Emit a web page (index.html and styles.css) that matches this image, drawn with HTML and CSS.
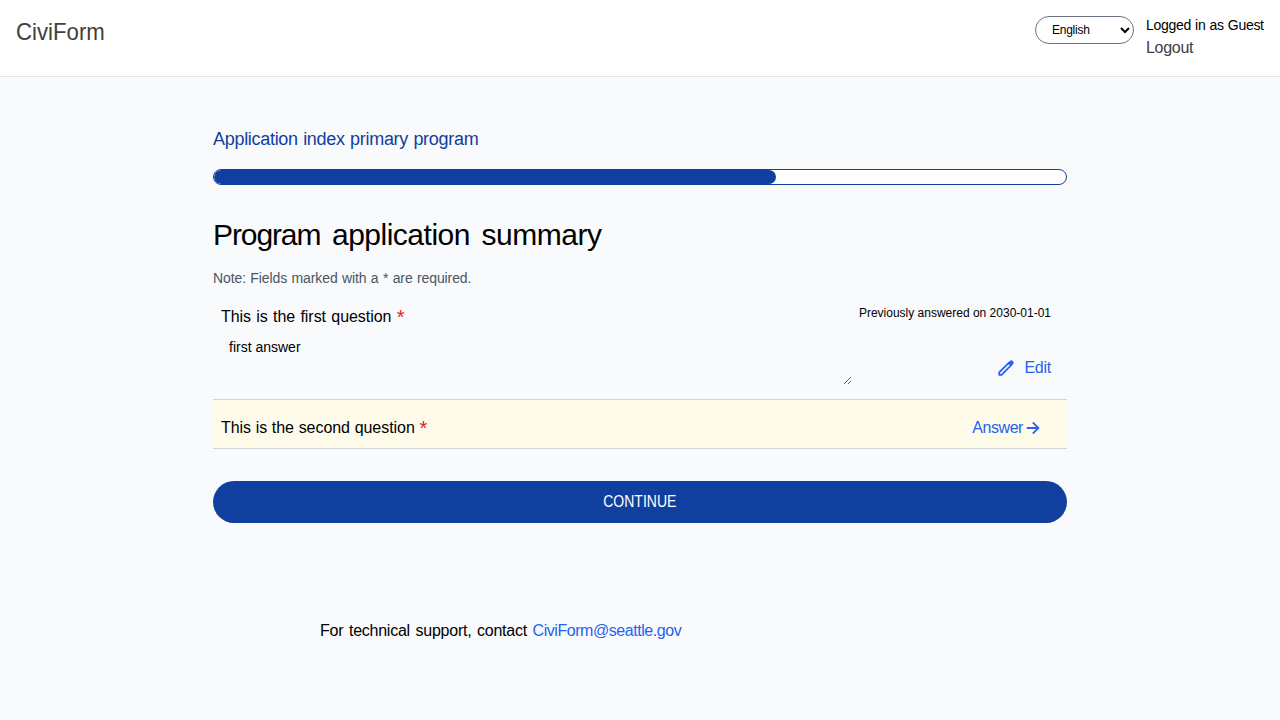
FILE: index.html
```
<!DOCTYPE html>
<html lang="en">
<head>
<meta charset="utf-8">
<title>Program application summary</title>
<link rel="stylesheet" href="styles.css">
</head>
<body>
<header class="nav">
  <div class="brand"><span class="brand-name">CiviForm</span></div>
  <div class="account">
    <select class="language" aria-label="Language"><option>English</option></select>
    <div class="user"><div class="status">Logged in as Guest</div><a class="logout">Logout</a></div>
  </div>
</header>
<main class="content">
  <h2 class="program">Application index primary program</h2>
  <div class="progress"><div class="progress-fill"></div></div>
  <h1 class="title"><span class="title-lead">Program</span> application summary</h1>
  <div class="note">Note: Fields marked with a * are required.</div>
  <section class="row answered">
    <div class="question">
      <div class="q-text first">This is the first question <span class="required">*</span></div>
      <textarea class="answer" readonly aria-label="Answer">first answer</textarea>
    </div>
    <div class="meta">
      <div class="previous">Previously answered on 2030-01-01</div>
      <a class="edit"><svg width="20" height="20" viewBox="0 0 20 20" fill="none" stroke="currentColor" stroke-width="1.8" stroke-linejoin="round"><path d="M3.2 14.4L12.8 4.8l2.4 2.4-9.6 9.6H3.2z"/><path d="M12.2 5l2.1-2.1q1-.8 2 .1l.7.7q.9 1 .1 2L15 7.8z" fill="currentColor" stroke-width=".7"/></svg><span>Edit</span></a>
    </div>
  </section>
  <section class="row unanswered">
    <div class="q-text second">This is the second question <span class="required">*</span></div>
    <a class="answer-link"><span>Answer</span><svg width="20" height="20" viewBox="0 0 20 20" fill="none" stroke="currentColor" stroke-width="1.8"><path d="M3.8 10h11.6M9.8 4.4l5.6 5.6-5.6 5.6"/></svg></a>
  </section>
  <button class="continue"><span class="continue-label">CONTINUE</span></button>
</main>
<footer class="support">For technical support, contact <a class="email">CiviForm@seattle.gov</a></footer>
</body>
</html>
```
FILE: styles.css
```
* { box-sizing: border-box; }
body { margin: 0; background: #f8fafc; color: #000; font: 16px/24px "Liberation Sans", Arial, sans-serif; letter-spacing: -.25px; }
h1, h2 { margin: 0; font-weight: 400; }
.nav { display: flex; justify-content: space-between; height: 77px; padding: 16px; background: #fff; border-bottom: 1px solid #e2e4e7; }
.brand { font-size: 24px; line-height: 32px; letter-spacing: 0; color: #404040; }
.brand-name { display: inline-block; transform: scaleX(.925); transform-origin: left; }
.account { display: flex; align-items: flex-start; gap: 12px; }
.language { width: 99px; height: 28px; padding: 0 0 0 12px; border: 1px solid #6b7280; border-radius: 14px; background: #fff; color: #000; font: 12px "Liberation Sans", Arial, sans-serif; letter-spacing: -.25px; }
.user { width: 118px; white-space: nowrap; }
.status { height: 20px; font-size: 14px; line-height: 19px; letter-spacing: -.29px; word-spacing: .5px; }
.logout { display: block; color: #404040; letter-spacing: -.3px; }
.content { width: 854px; margin: 48px auto 0; }
.program { color: #113f9f; font-size: 18px; line-height: 28px; letter-spacing: -.3px; word-spacing: .7px; }
.progress { height: 16px; margin-top: 16px; border: 1px solid #113f9f; border-radius: 8px; background: #fff; overflow: hidden; }
.progress-fill { width: 66%; height: 14px; border-radius: 7px; background: #113f9f; }
.title { margin-top: 32px; font-size: 30px; line-height: 36px; letter-spacing: -.5px; word-spacing: 3.8px; }
.title-lead { letter-spacing: -1.1px; }
.note { height: 20px; margin-top: 16px; color: #4b5563; font-size: 14px; line-height: 19px; letter-spacing: -.1px; word-spacing: .6px; }
.row { display: flex; justify-content: space-between; border-bottom: 1px solid #d1d5db; }
.answered { height: 111px; padding: 16px 16px 0 8px; }
.question { width: 638px; }
.q-text { letter-spacing: -.05px; }
.first { word-spacing: .9px; }
.second { word-spacing: .3px; }
.answer { display: block; width: 631px; height: 52px; margin: 4px 0 0; padding: 4px 0 0 8px; border: 0; outline: 0; background: transparent; color: #000; font: 14px/20px "Liberation Sans", Arial, sans-serif; letter-spacing: 0; resize: both; }
.required { color: #dc2626; font-size: 20px; line-height: 0; vertical-align: -2px; }
.meta { display: flex; flex-direction: column; align-items: flex-end; }
.previous { font-size: 12px; line-height: 16px; letter-spacing: 0; white-space: nowrap; }
.edit { display: flex; align-items: center; gap: 8px; margin-top: 35px; color: #2563eb; }
.unanswered { height: 49px; padding: 16px 24px 8px 8px; background: #fffbeb; }
.answer-link { display: flex; align-items: center; color: #2563eb; letter-spacing: -.45px; }
.continue { display: block; width: 100%; height: 42px; margin-top: 32px; border: 0; border-radius: 21px; background: #113f9f; color: #fff; font: 16px/24px "Liberation Sans", Arial, sans-serif; }
.continue-label { display: inline-block; transform: scaleX(.875); }
.support { margin: 96px 0 0 320px; word-spacing: 1.5px; }
.email { color: #2563eb; letter-spacing: -.45px; }
```
